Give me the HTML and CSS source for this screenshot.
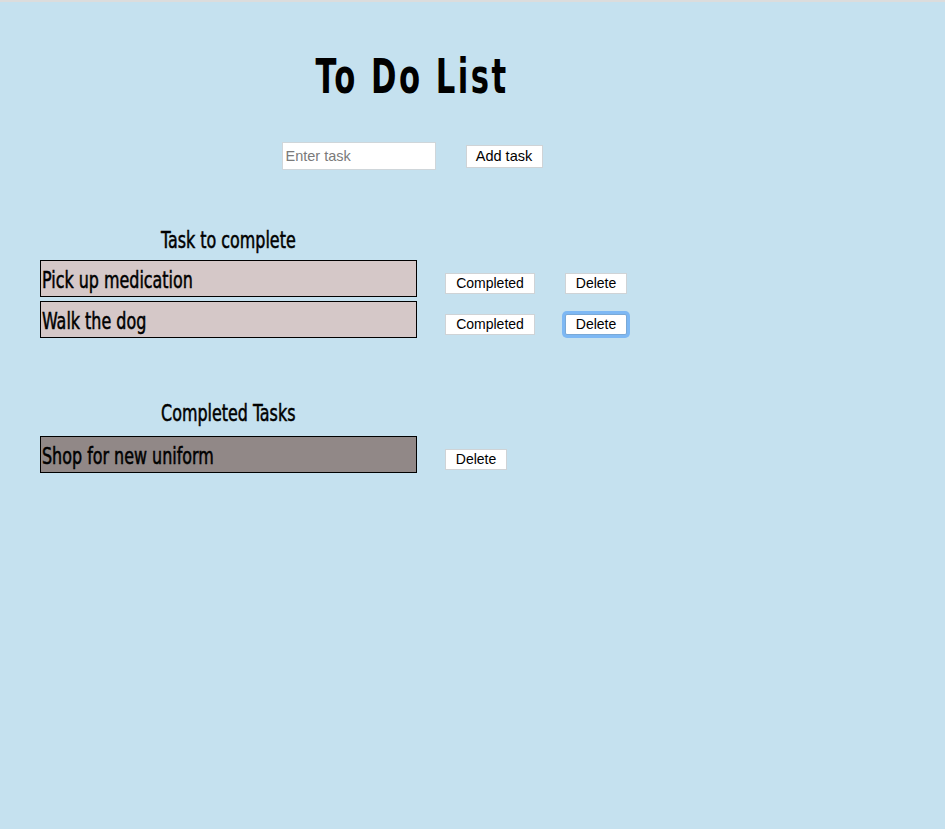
FILE: index.html
```html
<!DOCTYPE html>
<html lang="en">
<head>
<meta charset="utf-8">
<title>To Do List</title>
<link rel="stylesheet" href="styles.css">
</head>
<body>
<div class="page">
  <header class="header">
    <h1 class="title"><span class="narrow">To Do List</span></h1>
    <div class="add-row">
      <input class="task-input" type="text" placeholder="Enter task">
      <button class="btn btn-add">Add task</button>
    </div>
  </header>

  <section class="section section-todo">
    <h2 class="section-title"><span class="narrow">Task to complete</span></h2>
    <div class="task-row">
      <div class="task task-open"><span class="narrow narrow-left">Pick up medication</span></div>
      <div class="actions">
        <button class="btn btn-complete">Completed</button>
        <button class="btn btn-delete">Delete</button>
      </div>
    </div>
    <div class="task-row">
      <div class="task task-open"><span class="narrow narrow-left">Walk the dog</span></div>
      <div class="actions">
        <button class="btn btn-complete">Completed</button>
        <button class="btn btn-delete focused">Delete</button>
      </div>
    </div>
  </section>

  <section class="section section-done">
    <h2 class="section-title"><span class="narrow">Completed Tasks</span></h2>
    <div class="task-row">
      <div class="task task-done"><span class="narrow narrow-left">Shop for new uniform</span></div>
      <div class="actions">
        <button class="btn btn-delete">Delete</button>
      </div>
    </div>
  </section>
</div>
</body>
</html>
```

FILE: styles.css
```css
html, body {
  margin: 0;
  padding: 0;
}

body {
  background: #c5e1ef;
  border-top: 2px solid #dcdcdc;
  min-height: 827px;
  font-family: "Liberation Sans", Arial, sans-serif;
}

.page {
  padding-left: 40px;
}

.narrow {
  display: inline-block;
  white-space: nowrap;
  transform: scaleX(0.77);
  transform-origin: center;
  -webkit-text-stroke: 0.5px #000;
}

.narrow-left {
  transform-origin: left center;
}

.header {
  width: 744px;
  display: flex;
  flex-direction: column;
  align-items: center;
}

.title {
  margin: 42px 0 0 0;
  font-family: "DejaVu Sans Condensed", "DejaVu Sans", sans-serif;
  font-weight: 700;
  font-size: 48px;
  line-height: 64px;
  color: #000;
}

.title .narrow {
  letter-spacing: 3.5px;
  transform: scaleX(0.71);
  -webkit-text-stroke: 0;
}

.add-row {
  margin-top: 34px;
  display: flex;
  align-items: center;
  gap: 30px;
}

.task-input {
  box-sizing: border-box;
  width: 154px;
  height: 28px;
  border: 1px solid #cfd6da;
  padding: 0 3px;
  font-family: "Liberation Sans", Arial, sans-serif;
  font-size: 14.5px;
  background: #fff;
  outline: none;
}

.task-input::placeholder {
  color: #7a7a7a;
}

.btn {
  box-sizing: border-box;
  height: 21px;
  padding: 0;
  border: 1px solid #cfd3d6;
  border-radius: 0;
  background: #fff;
  color: #000;
  font-family: "Liberation Sans", Arial, sans-serif;
  font-size: 14px;
  line-height: 19px;
  text-align: center;
}

.btn-add {
  width: 77px;
  height: 23px;
  font-size: 14.5px;
}

.section {
  width: 377px;
}

.section-todo {
  margin-top: 56px;
}

.section-done {
  margin-top: 61px;
}

.section-title {
  margin: 0 0 6px 0;
  text-align: center;
  font-family: "DejaVu Sans Condensed", "DejaVu Sans", sans-serif;
  font-weight: 400;
  font-size: 23px;
  line-height: 28px;
}

.section-done .section-title {
  margin-bottom: 9px;
}

.task-row {
  display: flex;
  align-items: flex-start;
  margin-bottom: 4px;
}

.task {
  box-sizing: border-box;
  flex: 0 0 377px;
  height: 37px;
  border: 1px solid #000;
  padding: 2px 1px 0 1px;
  font-family: "DejaVu Sans Condensed", "DejaVu Sans", sans-serif;
  font-size: 23px;
  line-height: 34px;
  white-space: nowrap;
  overflow: visible;
}

.task-open {
  background: #d5c8c8;
}

.task-done {
  background: #918887;
}

.actions {
  display: flex;
  gap: 30px;
  margin-left: 28px;
  padding-top: 13px;
}

.btn-complete {
  width: 90px;
}

.btn-delete {
  width: 62px;
}

.focused {
  border-color: #7aa9d6;
  border-radius: 2px;
  box-shadow: 0 0 0 3px #7db8f4;
}
```
